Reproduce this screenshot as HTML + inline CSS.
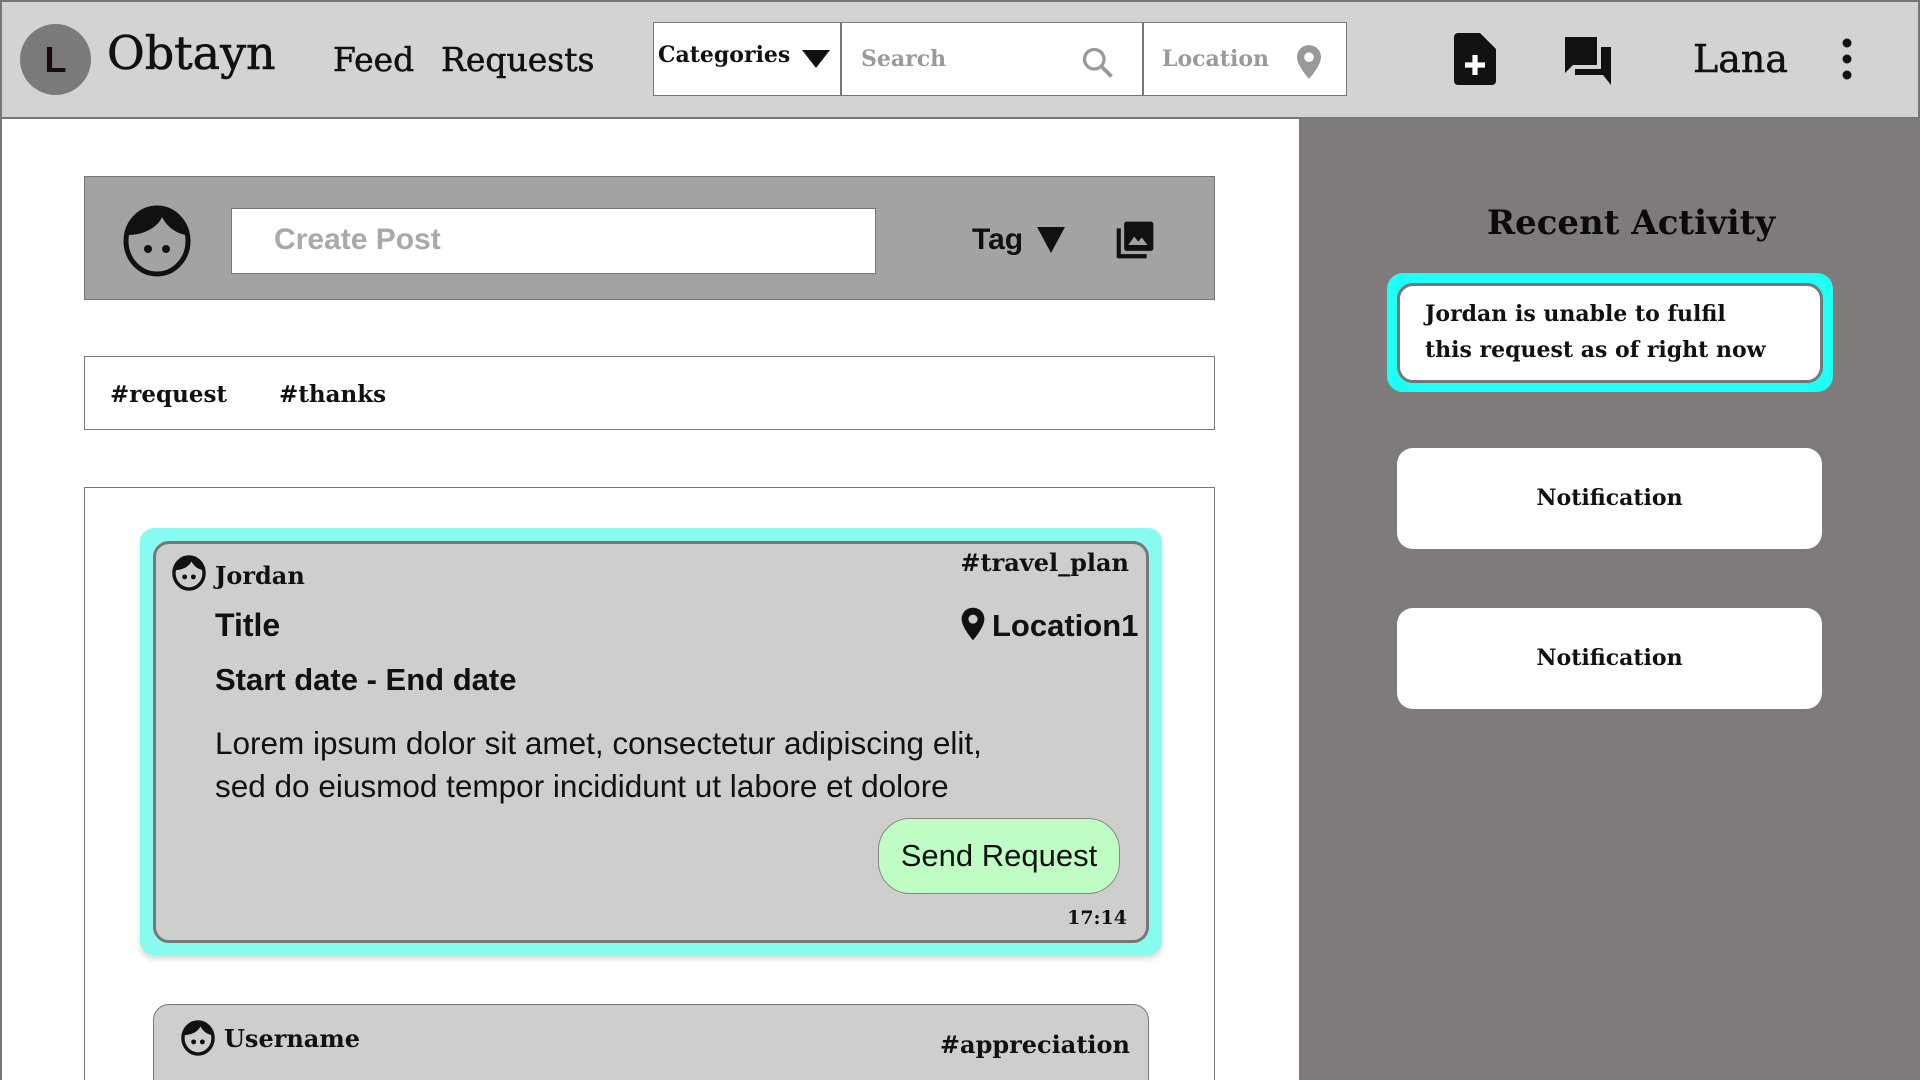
<!DOCTYPE html>
<html><head><meta charset="utf-8"><style>
*{margin:0;padding:0;box-sizing:border-box}
html,body{width:1920px;height:1080px;overflow:hidden}
body{background:#fff;position:relative;font-family:"Liberation Sans",sans-serif;color:#111}
.a{position:absolute}
.serif{font-family:"DejaVu Serif",serif}
.hdr{left:0;top:0;width:1920px;height:119px;background:#d3d3d3;border:2px solid #777;border-bottom:2px solid #777}
.right{left:1299px;top:119px;width:621px;height:961px;background:#7f7b7b}
.main{left:0;top:119px;width:1299px;height:961px;background:#fff;border-left:2px solid #777}
.box{border:1.5px solid #777}
#clip{position:absolute;left:0;top:0;width:1920px;height:1080px;overflow:hidden}
</style></head><body><div id="clip">
<div class="a hdr"></div>
<div class="a" style="left:20px;top:24px;width:71px;height:71px;border-radius:50%;background:#7a7a7a"></div>
<div class="a" style="left:20px;top:24px;width:71px;height:71px;text-align:center;font-family:'Liberation Sans',sans-serif;font-weight:bold;font-size:36px;line-height:71px;color:#1a0a0a">L</div>
<div class="a serif" style="left:107px;top:26px;font-size:46px;-webkit-text-stroke:0.6px #111">Obtayn</div>
<div class="a serif" style="left:333px;top:40px;font-size:33px;-webkit-text-stroke:0.5px #111">Feed</div>
<div class="a serif" style="left:441px;top:40px;font-size:33px;-webkit-text-stroke:0.5px #111">Requests</div>
<div class="a box" style="left:653px;top:22px;width:694px;height:74px;background:#fff"></div>
<div class="a" style="left:840px;top:22px;width:1.5px;height:74px;background:#777"></div>
<div class="a" style="left:1142px;top:22px;width:1.5px;height:74px;background:#777"></div>
<div class="a serif" style="left:658px;top:42px;font-size:22px;font-weight:bold">Categories</div>
<svg class="a" style="left:802px;top:50px" width="28" height="20"><path d="M0 0H28L14 18Z" fill="#111"/></svg>
<div class="a serif" style="left:861px;top:46px;font-size:22px;font-weight:bold;color:#9a9a9a">Search</div>
<svg class="a" style="left:1080px;top:45px" width="36" height="36" viewBox="0 0 24 24"><circle cx="9.5" cy="9.5" r="6.5" fill="none" stroke="#999" stroke-width="2.2"/><path d="M14.5 14.5L21 21" stroke="#999" stroke-width="2.6"/></svg>
<div class="a serif" style="left:1162px;top:46px;font-size:22px;font-weight:bold;color:#9a9a9a">Location</div>
<svg class="a" style="left:1294px;top:44px" width="30" height="36" viewBox="0 0 24 30"><path d="M12 1C6 1 2 5.5 2 11c0 7 10 18 10 18s10-11 10-18C22 5.5 18 1 12 1z" fill="#999"/><circle cx="12" cy="11" r="4" fill="#fff"/></svg>
<svg class="a" style="left:1454px;top:33px" width="42" height="52" viewBox="0 0 21 26"><path d="M2 0H13L21 8V24a2 2 0 0 1-2 2H2a2 2 0 0 1-2-2V2a2 2 0 0 1 2-2z" fill="#111"/><path d="M10.5 11v10M5.5 16h10" stroke="#fff" stroke-width="2.6"/></svg>
<svg class="a" style="left:1565px;top:37px" width="46" height="48" viewBox="0 0 23 24"><path d="M0 0H16V14H4L0 18Z" fill="#111"/><path d="M18 5H23V24L19 19H5V16H18Z" fill="#111"/></svg>
<div class="a serif" style="left:1693px;top:37px;font-size:38px;-webkit-text-stroke:0.5px #111">Lana</div>
<svg class="a" style="left:1840px;top:38px" width="14" height="42"><circle cx="7" cy="5" r="4.5" fill="#111"/><circle cx="7" cy="21" r="4.5" fill="#111"/><circle cx="7" cy="37" r="4.5" fill="#111"/></svg>

<div class="a main"></div>
<div class="a right"></div>

<div class="a box" style="left:84px;top:176px;width:1131px;height:124px;background:#a3a3a3"></div>
<svg class="a" style="left:122px;top:205px" width="70" height="72" viewBox="0 0 70 72"><ellipse cx="35" cy="36" rx="31" ry="33" fill="none" stroke="#111" stroke-width="5"/><path d="M6 30C12 10 28 3 35 3C42 3 58 10 64 30C52 28 44 20 40 12C36 22 22 30 6 30Z" fill="#111"/><circle cx="26" cy="44" r="4" fill="#111"/><circle cx="44" cy="44" r="4" fill="#111"/></svg>
<div class="a box" style="left:231px;top:208px;width:645px;height:66px;background:#fff"></div>
<div class="a" style="left:274px;top:223px;font-size:30px;font-weight:bold;color:#a9a9a9">Create Post</div>
<div class="a" style="left:972px;top:223px;font-size:30px;font-weight:bold">Tag</div>
<svg class="a" style="left:1037px;top:227px" width="28" height="26"><path d="M0 0H28L14 26Z" fill="#111"/></svg>
<svg class="a" style="left:1115px;top:220px" width="40" height="40" viewBox="0 0 24 24"><path d="M1 5v17a1 1 0 0 0 1 1h17v-2.5H3.5V5z" fill="#111"/><rect x="5.5" y="1" width="17.5" height="17.5" rx="1.5" fill="#111"/><path d="M8 15l3.5-5 2.5 3 2-2.5 3.5 4.5z" fill="#a3a3a3"/></svg>

<div class="a box" style="left:84px;top:356px;width:1131px;height:74px;background:#fff"></div>
<div class="a serif" style="left:110px;top:381px;font-size:23px;font-weight:bold">#request</div>
<div class="a serif" style="left:279px;top:381px;font-size:23px;font-weight:bold">#thanks</div>

<div class="a box" style="left:84px;top:487px;width:1131px;height:600px;background:#fff"></div>
<div class="a" style="left:140px;top:528px;width:1022px;height:427px;background:#88fbf0;border-radius:14px;box-shadow:0 4px 6px rgba(0,0,0,.15)"></div>
<div class="a" style="left:153px;top:541px;width:996px;height:402px;background:#cecece;border:3px solid #777;border-radius:16px"></div>
<svg class="a" style="left:172px;top:555px" width="34" height="36" viewBox="0 0 70 72"><ellipse cx="35" cy="36" rx="31" ry="33" fill="none" stroke="#111" stroke-width="7"/><path d="M6 30C12 10 28 3 35 3C42 3 58 10 64 30C52 28 44 20 40 12C36 22 22 30 6 30Z" fill="#111"/><circle cx="26" cy="44" r="5" fill="#111"/><circle cx="44" cy="44" r="5" fill="#111"/></svg>
<div class="a serif" style="left:215px;top:561px;font-size:24px;font-weight:bold">Jordan</div>
<div class="a serif" style="right:791px;top:548px;font-size:24px;font-weight:bold">#travel_plan</div>
<div class="a" style="left:215px;top:607px;font-size:32px;font-weight:bold">Title</div>
<svg class="a" style="left:960px;top:606px" width="26" height="36" viewBox="0 0 24 32"><path d="M12 1C6 1 1.5 5.5 1.5 11.5c0 7.5 10.5 19.5 10.5 19.5s10.5-12 10.5-19.5C22.5 5.5 18 1 12 1z" fill="#111"/><circle cx="12" cy="11.5" r="4.2" fill="#cecece"/></svg>
<div class="a" style="left:992px;top:608px;font-size:31px;font-weight:bold">Location1</div>
<div class="a" style="left:215px;top:662px;font-size:31px;font-weight:bold">Start date - End date</div>
<div class="a" style="left:215px;top:722px;font-size:31.5px;line-height:43px">Lorem ipsum dolor sit amet, consectetur adipiscing elit,<br>sed do eiusmod tempor incididunt ut labore et dolore</div>
<div class="a" style="left:878px;top:818px;width:242px;height:76px;background:#c0fdc4;border:1.5px solid #888;border-radius:32px;text-align:center;line-height:73px;font-size:31px">Send Request</div>
<div class="a serif" style="right:793px;top:907px;font-size:19px;font-weight:bold">17:14</div>

<div class="a" style="left:153px;top:1004px;width:996px;height:100px;background:#cecece;border:1.5px solid #777;border-radius:16px"></div>
<svg class="a" style="left:181px;top:1020px" width="34" height="36" viewBox="0 0 70 72"><ellipse cx="35" cy="36" rx="31" ry="33" fill="none" stroke="#111" stroke-width="7"/><path d="M6 30C12 10 28 3 35 3C42 3 58 10 64 30C52 28 44 20 40 12C36 22 22 30 6 30Z" fill="#111"/><circle cx="26" cy="44" r="5" fill="#111"/><circle cx="44" cy="44" r="5" fill="#111"/></svg>
<div class="a serif" style="left:224px;top:1024px;font-size:24px;font-weight:bold">Username</div>
<div class="a serif" style="right:790px;top:1030px;font-size:24px;font-weight:bold">#appreciation</div>

<div class="a serif" style="left:1299px;top:203px;width:664px;text-align:center;font-size:34px;font-weight:bold;color:#0a0a0a">Recent Activity</div>
<div class="a" style="left:1387px;top:273px;width:446px;height:119px;background:#20fff5;border-radius:16px"></div>
<div class="a" style="left:1397px;top:283px;width:426px;height:100px;background:#fff;border:3px solid #777;border-radius:16px"></div>
<div class="a serif" style="left:1425px;top:296px;font-size:22px;font-weight:bold;line-height:36px">Jordan is unable to fulfil<br>this request as of right now</div>
<div class="a serif" style="left:1397px;top:448px;width:425px;height:101px;background:#fff;border-radius:16px;text-align:center;line-height:101px;font-size:22px;font-weight:bold">Notification</div>
<div class="a serif" style="left:1397px;top:608px;width:425px;height:101px;background:#fff;border-radius:16px;text-align:center;line-height:101px;font-size:22px;font-weight:bold">Notification</div>
</div></body></html>
